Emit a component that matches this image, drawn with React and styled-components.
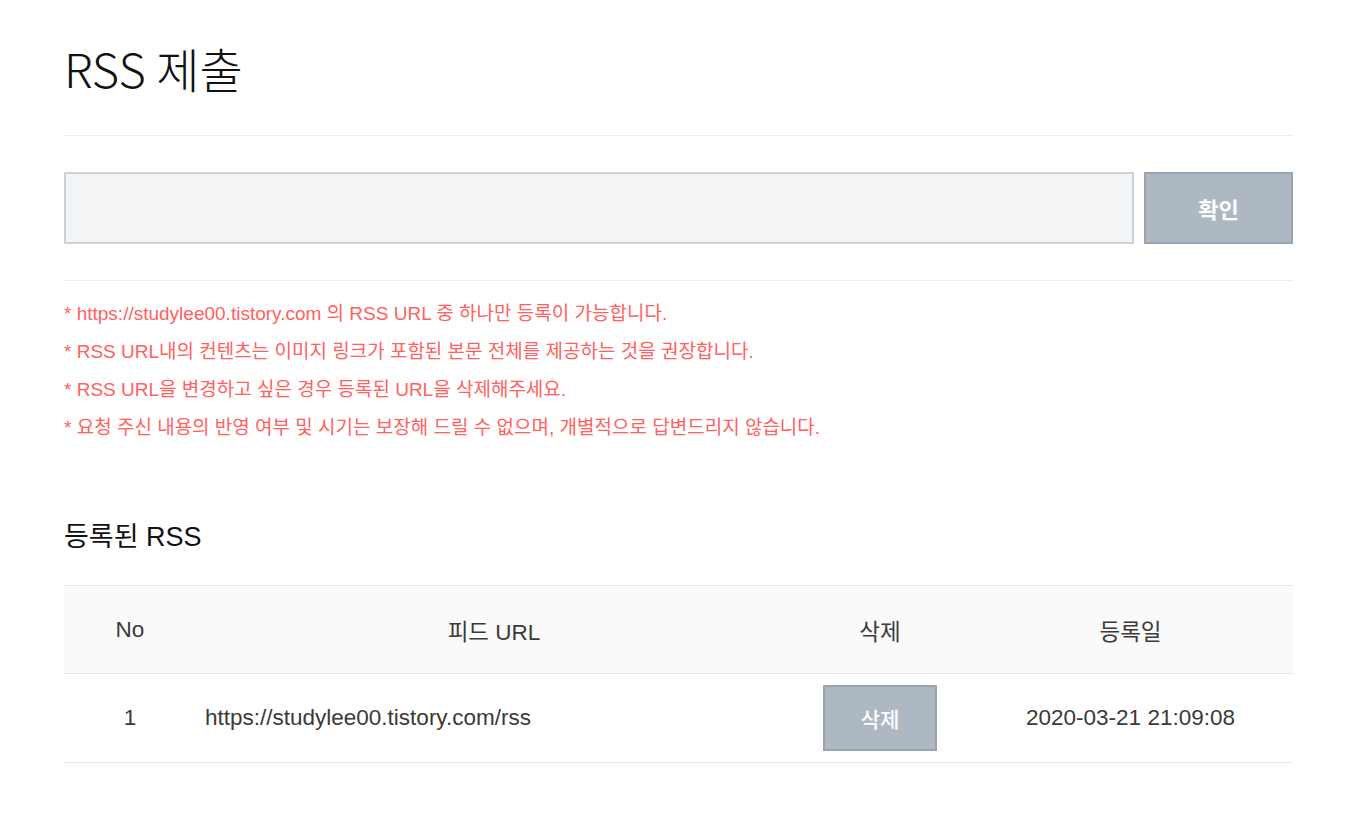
import React from 'react';
import styled, { createGlobalStyle } from 'styled-components';

const GlobalStyle = createGlobalStyle`
  body {
    margin: 0;
    background: #ffffff;
    font-family: 'Liberation Sans', 'Noto Sans CJK KR', sans-serif;
  }
`;

const Page = styled.div`
  padding: 0 56px 0 64px;
`;

const Title = styled.h1`
  margin: 0;
  padding: 42px 0 41px;
  font-family: 'Noto Sans CJK KR', sans-serif;
  font-weight: 300;
  font-size: 47px;
  line-height: 52px;
  color: #111;
  border-bottom: 1px solid #eeeeee;
`;

const Form = styled.form`
  display: flex;
  gap: 10px;
  padding: 36px 0;
  border-bottom: 1px solid #eeeeee;
`;

const Input = styled.input`
  flex: 1;
  height: 72px;
  margin: 0;
  box-sizing: border-box;
  border: 2px solid #c9d1da;
  background: #f3f4f6;
  outline: none;
`;

const GrayButton = styled.button`
  box-sizing: border-box;
  margin: 0;
  width: ${(p) => p.$w}px;
  height: ${(p) => p.$h}px;
  background: #aeb8c2;
  border: 2px solid #98a4b0;
  color: #ffffff;
  font-family: 'Noto Sans CJK KR', sans-serif;
  font-weight: ${(p) => p.$weight || 700};
  font-size: ${(p) => p.$size}px;
  cursor: pointer;
`;

const Notes = styled.ul`
  list-style: none;
  margin: 0;
  padding: 14px 0 0;
`;

const Note = styled.li`
  font-size: 19px;
  line-height: 38px;
  color: #ff6161;
`;

const SubTitle = styled.h2`
  margin: 0;
  padding: 74px 0 32px;
  font-weight: 400;
  font-size: 27px;
  line-height: 32px;
  color: #111;
`;

const Table = styled.table`
  width: 100%;
  border-collapse: collapse;
  table-layout: fixed;
  font-size: 22.5px;
  color: #3a3a3a;
`;

const Th = styled.th`
  width: ${(p) => p.$w || 'auto'};
  height: 87px;
  padding: 0;
  background: #fafafa;
  font-weight: 400;
  text-align: center;
  border-top: 1px solid #e6e6e6;
  border-bottom: 1px solid #e6e6e6;
`;

const Td = styled.td`
  height: 88px;
  text-align: ${(p) => p.$align || 'center'};
  padding: ${(p) => (p.$align === 'left' ? '0 0 0 9px' : '0')};
  border-bottom: 1px solid #e6e6e6;
`;

const rows = [
  { no: 1, url: 'https://studylee00.tistory.com/rss', date: '2020-03-21 21:09:08' },
];

export default function App() {
  return (
    <>
      <GlobalStyle />
      <Page>
        <Title>RSS 제출</Title>
        <Form onSubmit={(e) => e.preventDefault()}>
          <Input type="text" />
          <GrayButton type="submit" $w={149} $h={72} $size={22}>확인</GrayButton>
        </Form>
        <Notes>
          <Note>* https://studylee00.tistory.com 의 RSS URL 중 하나만 등록이 가능합니다.</Note>
          <Note>* RSS URL내의 컨텐츠는 이미지 링크가 포함된 본문 전체를 제공하는 것을 권장합니다.</Note>
          <Note>* RSS URL을 변경하고 싶은 경우 등록된 URL을 삭제해주세요.</Note>
          <Note>* 요청 주신 내용의 반영 여부 및 시기는 보장해 드릴 수 없으며, 개별적으로 답변드리지 않습니다.</Note>
        </Notes>
        <SubTitle>등록된 RSS</SubTitle>
        <Table>
          <thead>
            <tr>
              <Th $w="132px">No</Th>
              <Th $w="596px">피드 URL</Th>
              <Th $w="176px">삭제</Th>
              <Th>등록일</Th>
            </tr>
          </thead>
          <tbody>
            {rows.map((r) => (
              <tr key={r.no}>
                <Td>{r.no}</Td>
                <Td $align="left">{r.url}</Td>
                <Td>
                  <GrayButton type="button" $w={114} $h={66} $size={21} $weight={500}>삭제</GrayButton>
                </Td>
                <Td>{r.date}</Td>
              </tr>
            ))}
          </tbody>
        </Table>
      </Page>
    </>
  );
}
